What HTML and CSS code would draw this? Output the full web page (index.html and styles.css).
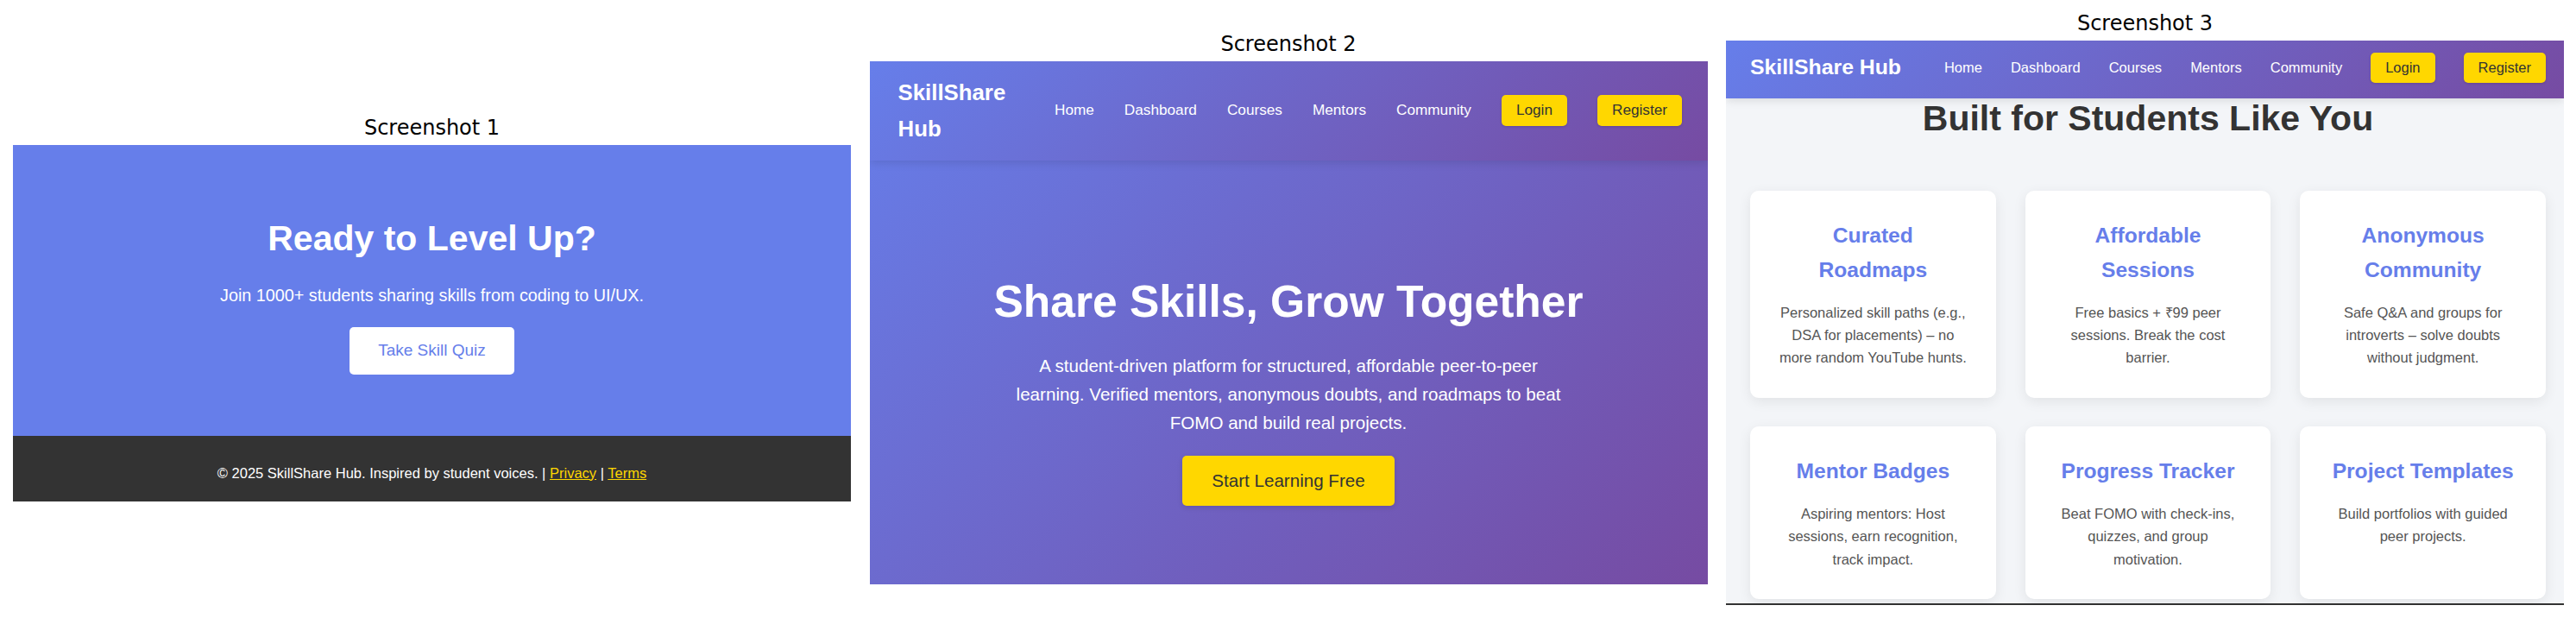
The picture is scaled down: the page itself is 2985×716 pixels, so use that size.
FILE: index.html
```html
<!DOCTYPE html>
<html lang="en">
<head>
<meta charset="utf-8">
<title>SkillShare Hub screenshots</title>
<link rel="stylesheet" href="styles.css">
</head>
<body>
<div class="figure">
  <section class="shot">
    <h2 class="shot-title">Screenshot 1</h2>
    <div class="frame frame-1">
      <div class="cta">
        <h2 class="cta-title">Ready to Level Up?</h2>
        <p class="cta-text">Join 1000+ students sharing skills from coding to UI/UX.</p>
        <a class="cta-btn" href="#">Take Skill Quiz</a>
      </div>
      <footer class="site-footer">
        <p>&copy; 2025 SkillShare Hub. Inspired by student voices. | <a href="#">Privacy</a> | <a href="#">Terms</a></p>
      </footer>
    </div>
  </section>

  <section class="shot">
    <h2 class="shot-title">Screenshot 2</h2>
    <div class="frame frame-2">
      <nav class="nav nav-2">
        <div class="logo">SkillShare Hub</div>
        <ul class="links">
          <li><a href="#">Home</a></li>
          <li><a href="#">Dashboard</a></li>
          <li><a href="#">Courses</a></li>
          <li><a href="#">Mentors</a></li>
          <li><a href="#">Community</a></li>
          <li><a class="nav-btn" href="#">Login</a></li>
          <li><a class="nav-btn" href="#">Register</a></li>
        </ul>
      </nav>
      <div class="hero">
        <h1 class="hero-title">Share Skills, Grow Together</h1>
        <p class="hero-text">A student-driven platform for structured, affordable peer-to-peer learning. Verified mentors, anonymous doubts, and roadmaps to beat FOMO and build real projects.</p>
        <a class="hero-btn" href="#">Start Learning Free</a>
      </div>
    </div>
  </section>

  <section class="shot">
    <h2 class="shot-title">Screenshot 3</h2>
    <div class="frame frame-3">
      <nav class="nav nav-3">
        <div class="logo">SkillShare Hub</div>
        <ul class="links">
          <li><a href="#">Home</a></li>
          <li><a href="#">Dashboard</a></li>
          <li><a href="#">Courses</a></li>
          <li><a href="#">Mentors</a></li>
          <li><a href="#">Community</a></li>
          <li><a class="nav-btn" href="#">Login</a></li>
          <li><a class="nav-btn" href="#">Register</a></li>
        </ul>
      </nav>
      <div class="features">
        <h2 class="features-title">Built for Students Like You</h2>
        <div class="cards">
          <div class="card"><h3>Curated Roadmaps</h3><p>Personalized skill paths (e.g., DSA for placements) – no more random YouTube hunts.</p></div>
          <div class="card"><h3>Affordable Sessions</h3><p>Free basics + ₹99 peer sessions. Break the cost barrier.</p></div>
          <div class="card"><h3>Anonymous Community</h3><p>Safe Q&amp;A and groups for introverts – solve doubts without judgment.</p></div>
          <div class="card"><h3>Mentor Badges</h3><p>Aspiring mentors: Host sessions, earn recognition, track impact.</p></div>
          <div class="card"><h3>Progress Tracker</h3><p>Beat FOMO with check-ins, quizzes, and group motivation.</p></div>
          <div class="card"><h3>Project Templates</h3><p>Build portfolios with guided peer projects.</p></div>
        </div>
      </div>
      <div class="footer-edge"></div>
    </div>
  </section>
</div>
</body>
</html>
```

FILE: styles.css
```css
html, body {
  margin: 0;
  padding: 0;
  background: #ffffff;
}

.figure {
  display: flex;
  align-items: center;
  gap: 21.5px;
  padding: 0 15px;
  height: 716px;
  box-sizing: border-box;
}

.shot {
  width: 971px;
  flex: 0 0 971px;
  display: flex;
  flex-direction: column;
}

.shot-title {
  margin: 0;
  padding: 0 0 8px;
  font-family: "DejaVu Sans", sans-serif;
  font-weight: normal;
  font-size: 24px;
  line-height: 24px;
  color: #000;
  text-align: center;
}

.frame {
  overflow: hidden;
  font-family: "Liberation Sans", Arial, sans-serif;
  position: relative;
}

.frame a { text-decoration: none; }

/* ---------- Screenshot 1 ---------- */
.frame-1 { height: 413px; }

.cta {
  height: 337px;
  box-sizing: border-box;
  background: #667eea;
  color: #fff;
  text-align: center;
  padding-top: 85px;
}

.cta-title {
  margin: 0;
  font-size: 41px;
  line-height: 47px;
  font-weight: bold;
}

.cta-text {
  margin: 31px 0 0;
  font-size: 19.8px;
  line-height: 23px;
}

.cta-btn {
  display: inline-block;
  margin-top: 25px;
  background: #fff;
  color: #667eea;
  font-size: 19px;
  line-height: 22px;
  padding: 16.5px 33px;
  border-radius: 5px;
}

.site-footer {
  height: 76px;
  box-sizing: border-box;
  background: #333;
  color: #fff;
  text-align: center;
  padding-top: 30px;
}

.site-footer p {
  margin: 0;
  font-size: 16.5px;
  line-height: 26.4px;
}

.site-footer a {
  color: #ffd700;
  text-decoration: underline;
}

/* ---------- Shared nav ---------- */
.nav {
  display: flex;
  align-items: center;
  background: linear-gradient(135deg, #667eea 0%, #764ba2 100%);
  box-shadow: 0 2px 10px rgba(0, 0, 0, 0.12);
  position: relative;
  z-index: 1;
  color: #fff;
}

.logo {
  font-weight: bold;
  color: #fff;
}

.links {
  display: flex;
  align-items: center;
  list-style: none;
  margin: 0 0 0 auto;
  padding: 0;
  white-space: nowrap;
}

.links a { color: #fff; display: block; }

.links a.nav-btn {
  background: #ffd700;
  color: #333;
  border-radius: 5px;
  box-shadow: 0 1px 3px rgba(0, 0, 0, 0.15);
}

/* ---------- Screenshot 2 ---------- */
.frame-2 {
  height: 606px;
  background: linear-gradient(135deg, #667eea 0%, #764ba2 100%);
}

.nav-2 {
  padding: 15px 29.5px 16px 33px;
}

.nav-2 .logo {
  width: 150px;
  font-size: 25.8px;
  line-height: 42px;
}

.nav-2 .links { gap: 35px; }
.nav-2 .links a { font-size: 17.2px; line-height: 19.8px; }
.nav-2 .links a.nav-btn { padding: 8.4px 17px; }

.hero {
  text-align: center;
  color: #fff;
  padding-top: 133px;
  display: flex;
  flex-direction: column;
  align-items: center;
}

.hero-title {
  margin: 0;
  font-size: 51.5px;
  line-height: 60px;
  font-weight: bold;
}

.hero-text {
  margin: 28px 0 0;
  max-width: 650px;
  font-size: 20.6px;
  line-height: 33px;
}

.hero-btn {
  margin-top: 21.5px;
  background: #ffd700;
  color: #333;
  font-size: 20.6px;
  line-height: 24px;
  padding: 17px 34px;
  border-radius: 5px;
  box-shadow: 0 2px 6px rgba(0, 0, 0, 0.12);
}

/* ---------- Screenshot 3 ---------- */
.frame-3 {
  height: 654px;
  background: #f3f5f8;
}

.nav-3 {
  padding: 11px 21px 16px 28px;
}

.nav-3 .logo {
  font-size: 24.8px;
  line-height: 40px;
}

.nav-3 .links { gap: 33px; }
.nav-3 .links a { font-size: 16.5px; line-height: 19px; }
.nav-3 .links a.nav-btn { padding: 8px 17px; }

.features {
  padding: 0 21px 5px 28px;
}

.features-title {
  margin: 0 0 60.5px;
  text-align: center;
  font-size: 41px;
  line-height: 46px;
  font-weight: bold;
  color: #333;
}

.cards {
  display: grid;
  grid-template-columns: repeat(3, 1fr);
  gap: 33.3px 34px;
}

.card {
  background: #fff;
  border-radius: 10px;
  box-shadow: 0 4px 15px rgba(0, 0, 0, 0.08);
  padding: 32px 31.5px 33px;
  text-align: center;
}

.card h3 {
  margin: 0 0 16px;
  font-size: 24.6px;
  line-height: 40px;
  font-weight: bold;
  color: #667eea;
}

.card p {
  margin: 0;
  font-size: 16.5px;
  line-height: 26.4px;
  color: #555;
}

.footer-edge {
  height: 40px;
  background: #333;
}
```
